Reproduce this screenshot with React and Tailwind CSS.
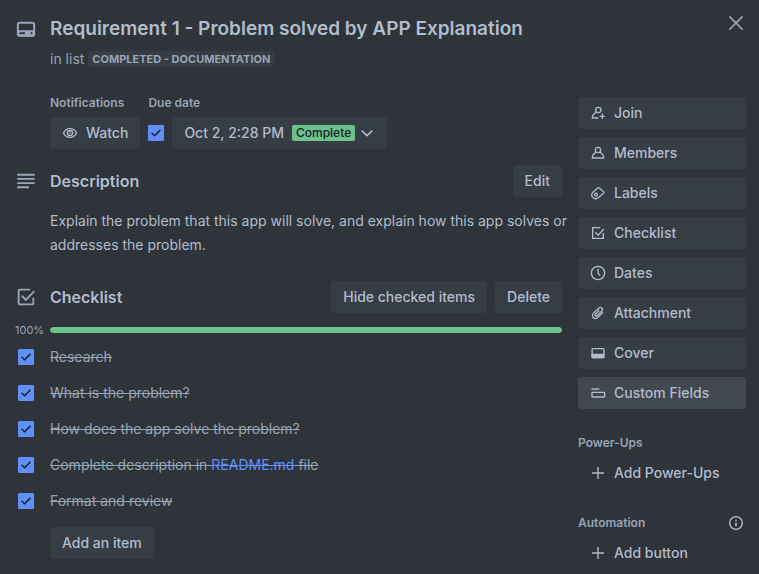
import React, { useState } from "react";

function Icon({ size = 16, className = "", children }) {
  return (
    <svg
      width={size}
      height={size}
      viewBox="0 0 24 24"
      fill="none"
      stroke="currentColor"
      strokeWidth="2"
      aria-hidden="true"
      className={`shrink-0 ${className}`}
    >
      {children}
    </svg>
  );
}

const icons = {
  card: (
    <>
      <rect x="2.2" y="4.600" width="19.600" height="15.600" rx="2" strokeWidth="2.400" />
      <path
        fill="currentColor"
        stroke="none"
        fillRule="evenodd"
        d="M2 13.500h20V19a2 2 0 0 1-2 2H4a2 2 0 0 1-2-2ZM4.200 16v2.400h6.600V16ZM17.500 16v2.400h2V16Z"
      />
    </>
  ),
  close: <path d="M4 4l16 16M20 4L4 20" strokeWidth="1.900" />,
  description: <path d="M1.500 4.500h21M1.500 9.500h21M1.500 14.500h21M1.500 19.500h14" strokeWidth="2.200" />,
  checklist: (
    <path
      strokeWidth="2.200"
      d="M17 3.200H4.200a1 1 0 0 0-1 1v15.600a1 1 0 0 0 1 1h15.600a1 1 0 0 0 1-1V13M7 10.500l4.800 5L22 5"
    />
  ),
  watch: (
    <>
      <path d="M2.200 12C4 8 7.600 5.500 12 5.500S20 8 21.800 12C20 16 16.400 18.500 12 18.500S4 16 2.200 12Z" />
      <circle cx="12" cy="12" r="3.800" />
      <circle cx="12" cy="12" r="1.200" fill="currentColor" stroke="none" />
    </>
  ),
  chevron: <path d="M4 8.500l8 7.500 8-7.500" strokeWidth="2.300" />,
  join: (
    <>
      <circle cx="12.500" cy="7.500" r="4" />
      <path d="M10 11C6 12.500 3.500 15.500 3.500 19.500h9M18.500 13v8M14.500 17h8" />
    </>
  ),
  member: (
    <>
      <circle cx="12" cy="7.500" r="4" />
      <path d="M9.200 11C5.800 12.300 3.500 15 3.500 19.500h17c0-4.500-2.300-7.200-5.700-8.500" />
    </>
  ),
  label: (
    <>
      <path d="M11.500 4.500L5 10C1.800 12.800 1.800 16.500 4.300 18.800 6.800 21 10.500 21 13.200 18.500L20.300 12.500c.7-.7.700-1.500.1-2.200L14 4.500c-.8-.8-1.700-.8-2.500 0Z" />
      <circle cx="9" cy="14.300" r="2.200" />
    </>
  ),
  checkbox: <path d="M15.500 4H4v16h16v-8M8 11l4.200 4.300L20.800 6" />,
  clock: (
    <>
      <circle cx="12" cy="12" r="10" />
      <path d="M12 5.500V12l3 4" />
    </>
  ),
  attachment: (
    <path d="M19.500 10.800l-7.800 7.800c-2 2-5 2.200-6.800.4s-1.600-4.800.4-6.800l7.600-7.400c1.500-1.400 3.600-1.500 4.900-.2s1.200 3.400-.3 4.900l-6.700 6.500c-.8.800-2 .9-2.700.2s-.6-1.900.2-2.700l5.700-5.500" />
  ),
  cover: (
    <>
      <rect x="3.200" y="5.500" width="17.600" height="13.500" rx="1" />
      <path d="M3.200 14h17.600v4a1 1 0 0 1-1 1H4.200a1 1 0 0 1-1-1Z" fill="currentColor" />
    </>
  ),
  fields: (
    <>
      <path d="M2 6h12" />
      <rect x="3" y="11" width="19" height="7" rx="1" />
    </>
  ),
  plus: <path d="M12 3v18M3 12h18" />,
  info: (
    <>
      <circle cx="12" cy="12" r="9.500" />
      <path d="M12 11v6M12 7v2" strokeWidth="2.300" />
    </>
  ),
};

const actions = [
  ["Join", "join"],
  ["Members", "member"],
  ["Labels", "label"],
  ["Checklist", "checkbox"],
  ["Dates", "clock"],
  ["Attachment", "attachment"],
  ["Cover", "cover"],
  ["Custom Fields", "fields"],
];

const initialItems = [
  { id: "research", text: "Research", done: true },
  { id: "problem", text: "What is the problem?", done: true },
  { id: "solve", text: "How does the app solve the problem?", done: true },
  {
    id: "readme",
    text: (
      <>
        Complete description in{" "}
        <a href="#readme" className="text-[#6190f8]">
          README.md
        </a>{" "}
        file
      </>
    ),
    done: true,
  },
  { id: "review", text: "Format and review", done: true },
];

function Checkbox({ id, label, checked, onChange }) {
  return (
    <span className="grid size-4 shrink-0 place-items-center">
      <input
        id={id}
        type="checkbox"
        aria-label={label}
        checked={checked}
        onChange={onChange}
        className="col-start-1 row-start-1 size-4 appearance-none rounded-[1px] border border-[#738096] checked:border-[#5f8ffa] checked:bg-[#5f8ffa]"
      />
      {checked && (
        <svg
          viewBox="0 0 16 16"
          aria-hidden="true"
          className="pointer-events-none col-start-1 row-start-1 size-4 text-[#1d2125]"
        >
          <path d="M4 8.300l2.700 2.500L12 5.300" fill="none" stroke="currentColor" strokeWidth="1.500" strokeLinecap="round" />
        </svg>
      )}
    </span>
  );
}

function Button({ className = "bg-[#373d45]", children, ...rest }) {
  return (
    <button
      type="button"
      className={`flex h-8 items-center rounded-[3px] px-3 font-medium whitespace-nowrap hover:bg-[#414850] ${className}`}
      {...rest}
    >
      {children}
    </button>
  );
}

function SectionHeader({ icon, title, children }) {
  return (
    <div className="flex items-center">
      <div className="flex w-[34px] shrink-0">
        <Icon size={20} className="text-[#9aa6b9]">
          {icons[icon]}
        </Icon>
      </div>
      <h2 className="flex-1 text-base font-semibold">{title}</h2>
      <div className="flex gap-2">{children}</div>
    </div>
  );
}

export default function App() {
  const [items, setItems] = useState(initialItems);
  const [complete, setComplete] = useState(true);
  const percent = Math.round((items.filter((i) => i.done).length / items.length) * 100);

  const toggle = (id) =>
    setItems((list) => list.map((i) => (i.id === id ? { ...i, done: !i.done } : i)));

  return (
    <div className="min-h-screen bg-[#2f333a] pr-[13px] pl-4 font-[Inter,'Liberation_Sans',sans-serif] text-sm text-[#b1bccd]">
      <header className="flex items-start pt-[13px]">
        <div className="mt-1 flex h-6 w-[34px] shrink-0 items-center">
          <Icon size={20} className="text-[#9aa6b9]">
            {icons.card}
          </Icon>
        </div>
        <div className="mt-1 min-w-0 flex-1">
          <h1 className="text-[19px] leading-6 font-semibold">
            Requirement 1 - Problem solved by APP Explanation
          </h1>
          <p className="mt-2 flex h-5 items-center gap-1 text-[#97a3b6]">
            in list
            <a
              href="#list"
              className="rounded-[3px] bg-[#373d45] px-1 text-[11px] leading-4 font-bold uppercase"
            >
              Completed - Documentation
            </a>
          </p>
        </div>
        <button type="button" aria-label="Close" className="flex size-5 items-center justify-center text-[#97a3b6]">
          <Icon size={20}>{icons.close}</Icon>
        </button>
      </header>

      <div className="flex gap-4">
        <main className="min-w-0 flex-1 pt-6">
          <div className="flex gap-2 pl-[34px]">
            <section>
              <h3 className="mb-1 text-xs leading-5 font-semibold text-[#97a3b6]">Notifications</h3>
              <Button>
                <Icon className="mr-2">{icons.watch}</Icon>
                Watch
              </Button>
            </section>
            <section>
              <h3 className="mb-1 text-xs leading-5 font-semibold text-[#97a3b6]">Due date</h3>
              <div className="flex items-center gap-2">
                <Checkbox
                  id="due"
                  label="Mark due date complete"
                  checked={complete}
                  onChange={() => setComplete(!complete)}
                />
                <Button>
                  Oct 2, 2:28 PM
                  {complete && (
                    <span className="mr-1 ml-2 rounded-xs bg-[#6bc28c] px-1 text-xs leading-4 text-[#1d2125]">
                      Complete
                    </span>
                  )}
                  <Icon>{icons.chevron}</Icon>
                </Button>
              </div>
            </section>
          </div>

          <section className="mt-4">
            <SectionHeader icon="description" title="Description">
              <Button>Edit</Button>
            </SectionHeader>
            <p className="mt-3 -mr-2 pl-[34px] leading-6">
              Explain the problem that this app will solve, and explain how this app solves or
              addresses the problem.
            </p>
          </section>

          <section className="mt-6">
            <SectionHeader icon="checklist" title="Checklist">
              <Button>Hide checked items</Button>
              <Button>Delete</Button>
            </SectionHeader>

            <div className="mt-2 flex items-center">
              <span className="-ml-1 w-[38px] shrink-0 pl-[3px] text-[11px] leading-[18px] text-[#97a3b6]">
                {percent}%
              </span>
              <div
                role="progressbar"
                aria-label="Checklist progress"
                aria-valuenow={percent}
                className="h-1.5 flex-1 overflow-hidden rounded-full bg-[#373d45]"
              >
                <div className="h-full rounded-full bg-[#6bc28c]" style={{ width: `${percent}%` }} />
              </div>
            </div>

            <ul>
              {items.map((item) => (
                <li key={item.id} className="flex h-9 items-center gap-4 pl-0.5">
                  <Checkbox id={item.id} checked={item.done} onChange={() => toggle(item.id)} />
                  <label
                    htmlFor={item.id}
                    className={item.done ? "text-[#97a3b6] line-through" : ""}
                  >
                    {item.text}
                  </label>
                </li>
              ))}
            </ul>
            <div className="mt-2 pl-[34px]">
              <Button>Add an item</Button>
            </div>
          </section>
        </main>

        <aside className="w-[168px] shrink-0 pt-7">
          <div className="flex flex-col gap-2">
            {actions.map(([label, icon]) => (
              <Button
                key={label}
                className={`w-full gap-2 ${label === "Custom Fields" ? "bg-[#414850]" : "bg-[#373d45]"}`}
              >
                <Icon>{icons[icon]}</Icon>
                {label}
              </Button>
            ))}
          </div>

          <h3 className="mt-6 mb-1 text-xs leading-5 font-semibold text-[#97a3b6]">Power-Ups</h3>
          <button type="button" className="flex h-8 w-full items-center gap-2 px-3 font-medium">
            <Icon>{icons.plus}</Icon>
            Add Power-Ups
          </button>

          <div className="mt-6 mb-1 flex h-5 items-center justify-between pr-0.5">
            <h3 className="text-xs font-semibold text-[#97a3b6]">Automation</h3>
            <button type="button" aria-label="About automation">
              <Icon>{icons.info}</Icon>
            </button>
          </div>
          <button type="button" className="flex h-8 w-full items-center gap-2 px-3 font-medium">
            <Icon>{icons.plus}</Icon>
            Add button
          </button>
        </aside>
      </div>
    </div>
  );
}
